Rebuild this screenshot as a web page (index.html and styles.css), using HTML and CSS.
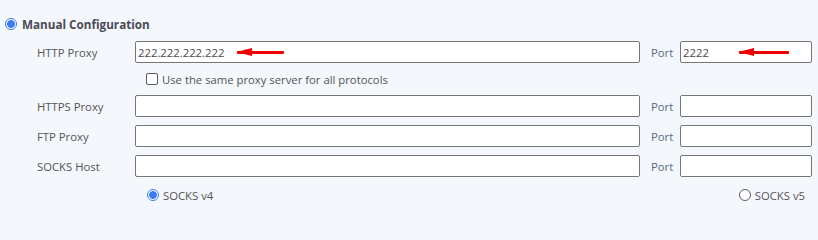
FILE: index.html
```html
<!DOCTYPE html>
<html lang="en">
<head>
<meta charset="utf-8">
<title>Manual Configuration</title>
<link rel="stylesheet" href="styles.css">
</head>
<body>
<div class="panel">
  <div class="heading">
    <span class="radio checked"></span>
    <span class="heading-text">Manual Configuration</span>
  </div>
  <div class="rows">
    <div class="row">
      <span class="label">HTTP Proxy</span>
      <div class="field main-field">
        <span class="value">222.222.222.222</span>
        <span class="arrow arrow-host"></span>
      </div>
      <span class="port-label">Port</span>
      <div class="field port-field">
        <span class="value">2222</span>
        <span class="arrow arrow-port"></span>
      </div>
    </div>
    <div class="check-row">
      <span class="checkbox"></span>
      <span class="opt-text">Use the same proxy server for all protocols</span>
    </div>
    <div class="row">
      <span class="label">HTTPS Proxy</span>
      <div class="field main-field"></div>
      <span class="port-label">Port</span>
      <div class="field port-field"></div>
    </div>
    <div class="row">
      <span class="label">FTP Proxy</span>
      <div class="field main-field"></div>
      <span class="port-label">Port</span>
      <div class="field port-field"></div>
    </div>
    <div class="row">
      <span class="label">SOCKS Host</span>
      <div class="field main-field"></div>
      <span class="port-label">Port</span>
      <div class="field port-field"></div>
    </div>
    <div class="socks-row">
      <div class="opt">
        <span class="radio checked small"></span>
        <span class="opt-text">SOCKS v4</span>
      </div>
      <div class="opt">
        <span class="radio small"></span>
        <span class="opt-text">SOCKS v5</span>
      </div>
    </div>
  </div>
</div>
</body>
</html>
```

FILE: styles.css
```css
html, body {
  margin: 0;
  padding: 0;
  background: #f4f7fb;
}
body {
  font-family: "Open Sans", "Noto Sans", sans-serif;
  font-size: 11.3px;
  color: #555;
  width: 818px;
  height: 223px;
  overflow: hidden;
}
.panel {
  padding: 17px 0 0 5px;
}
.heading {
  display: flex;
  align-items: center;
  height: 14px;
}
.heading-text {
  font-weight: 700;
  font-size: 11.7px;
  color: #4a4a58;
  margin-left: 5px;
}
.radio {
  box-sizing: border-box;
  width: 12px;
  height: 12px;
  border-radius: 50%;
  border: 1px solid #5a5a5a;
  background: #fff;
  display: inline-block;
  flex: none;
}
.radio.checked {
  border: 1px solid #3b7cf5;
  background: radial-gradient(circle, #3b7cf5 0 3.6px, #fff 4.2px);
}
.rows {
  margin-top: 10px;
  padding-left: 32px;
  display: flex;
  flex-direction: column;
}
.row {
  display: flex;
  align-items: center;
  height: 22px;
  margin-bottom: 8px;
}
.label {
  width: 98px;
  flex: none;
}
.field {
  position: relative;
  box-sizing: border-box;
  height: 22px;
  border: 1px solid #767676;
  border-radius: 2px;
  background: #fff;
  display: flex;
  align-items: center;
  padding-left: 2px;
  color: #4a4a4a;
  flex: none;
}
.main-field {
  width: 505px;
}
.port-label {
  margin-left: 11px;
  width: 29px;
  flex: none;
  color: #5a6a80;
}
.port-field {
  width: 132px;
}
.arrow {
  position: absolute;
  top: 9px;
  height: 3px;
  background: #f00000;
  border-radius: 1px;
}
.arrow-host {
  left: 101px;
  width: 47px;
}
.arrow-port {
  left: 58px;
  width: 50px;
}
.arrow::before {
  content: "";
  position: absolute;
  left: -1px;
  top: -3px;
  border-right: 16px solid #f00000;
  border-top: 4.5px solid transparent;
  border-bottom: 4.5px solid transparent;
}
.check-row {
  display: flex;
  align-items: center;
  height: 16px;
  margin: 0 0 8px 109px;
}
.checkbox {
  box-sizing: border-box;
  width: 12px;
  height: 12px;
  border: 1px solid #5a5a5a;
  border-radius: 2px;
  background: #fff;
  flex: none;
  margin-right: 4px;
}
.opt-text {
  color: #555;
}
.socks-row {
  display: flex;
  justify-content: space-between;
  align-items: center;
  height: 20px;
  margin-left: 110px;
  width: 658px;
}
.opt {
  display: flex;
  align-items: center;
}
.opt .radio {
  margin-right: 4px;
}
```
